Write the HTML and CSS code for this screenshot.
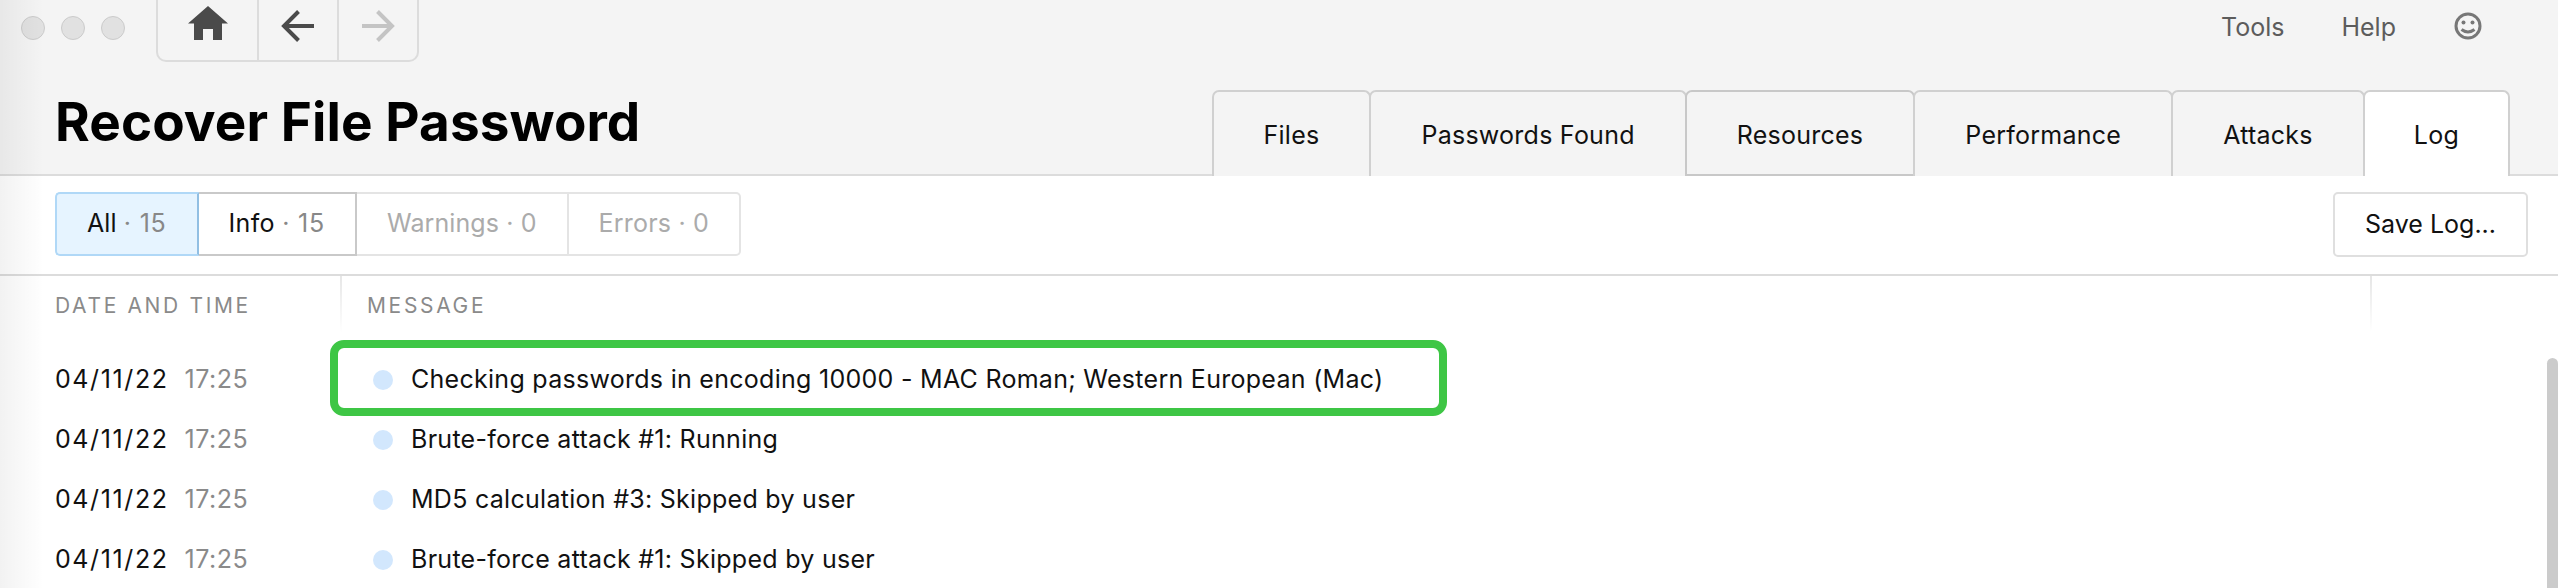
FILE: index.html
```html
<!DOCTYPE html>
<html lang="en">
<head>
<meta charset="utf-8">
<title>Recover File Password</title>
<link rel="stylesheet" href="styles.css">
</head>
<body>
<div class="window">
  <header class="header">
    <div class="topbar">
      <div class="lights"><span class="light"></span><span class="light"></span><span class="light"></span></div>
      <nav class="nav">
        <div class="nav-btn nav-home">
          <svg width="40" height="34" viewBox="0 0 40 34"><path class="fill-dark" d="M20 0 L40 17.500 L34 17.500 L34 34 L25 34 L25 23 L15 23 L15 34 L6 34 L6 17.500 L0 17.500 Z"/></svg>
        </div>
        <div class="nav-btn nav-back">
          <svg width="34" height="34" viewBox="0 0 34 34"><path class="stroke-dark" d="M33 17 H4 M17.500 2.500 L3 17 L17.500 31.500"/></svg>
        </div>
        <div class="nav-btn nav-fwd">
          <svg width="34" height="34" viewBox="0 0 34 34"><path class="stroke-light" d="M1 17 H30 M16.500 2.500 L31 17 L16.500 31.500"/></svg>
        </div>
      </nav>
      <div class="menu">
        <span class="menu-item menu-tools">Tools</span>
        <span class="menu-item menu-help">Help</span>
        <svg class="smiley" width="28" height="28" viewBox="0 0 28 28">
          <circle class="smile-line" cx="14" cy="14" r="12"/>
          <circle class="smile-eye" cx="9.500" cy="10.500" r="2"/>
          <circle class="smile-eye" cx="18.500" cy="10.500" r="2"/>
          <path class="smile-line" d="M7.500 17.500 Q14 22.500 20.500 17.500"/>
        </svg>
      </div>
    </div>
    <div class="titlebar">
      <h1 class="title">Recover File Password</h1>
      <div class="tabs">
        <div class="tab">Files</div>
        <div class="tab">Passwords Found</div>
        <div class="tab tab-outlined">Resources</div>
        <div class="tab">Performance</div>
        <div class="tab">Attacks</div>
        <div class="tab tab-active">Log</div>
      </div>
    </div>
  </header>

  <section class="filterbar">
    <div class="filters">
      <div class="seg seg-all">All <span class="count">· 15</span></div>
      <div class="seg seg-info">Info <span class="count">· 15</span></div>
      <div class="seg seg-off">Warnings · 0</div>
      <div class="seg seg-off seg-last">Errors · 0</div>
    </div>
    <div class="save">Save Log...</div>
  </section>

  <section class="table">
    <div class="thead">
      <div class="th th-date">DATE AND TIME</div>
      <div class="th th-msg">MESSAGE</div>
      <div class="th th-end"></div>
    </div>
    <div class="row">
      <div class="cell-date"><span class="date">04/11/22</span><span class="time">17:25</span></div>
      <div class="cell-msg"><span class="dot"></span><span class="msg">Checking passwords in encoding 10000 - MAC Roman; Western European (Mac)</span><div class="highlight"></div></div>
    </div>
    <div class="row">
      <div class="cell-date"><span class="date">04/11/22</span><span class="time">17:25</span></div>
      <div class="cell-msg"><span class="dot"></span><span class="msg">Brute-force attack #1: Running</span></div>
    </div>
    <div class="row">
      <div class="cell-date"><span class="date">04/11/22</span><span class="time">17:25</span></div>
      <div class="cell-msg"><span class="dot"></span><span class="msg">MD5 calculation #3: Skipped by user</span></div>
    </div>
    <div class="row">
      <div class="cell-date"><span class="date">04/11/22</span><span class="time">17:25</span></div>
      <div class="cell-msg"><span class="dot"></span><span class="msg">Brute-force attack #1: Skipped by user</span></div>
    </div>
    <div class="scrollbar"></div>
  </section>
  <div class="edge-shade"></div>
</div>
</body>
</html>
```
FILE: styles.css
```css
* { box-sizing: border-box; }
html, body { margin: 0; padding: 0; }
body {
  font-family: Inter, "Liberation Sans", sans-serif;
  font-size: 25px;
  color: #111;
  background: #fff;
}
.window {
  position: relative;
  display: flex;
  flex-direction: column;
  width: 2558px;
  height: 588px;
  overflow: hidden;
}
.edge-shade {
  position: absolute;
  left: 0;
  top: 0;
  bottom: 0;
  width: 44px;
  background: linear-gradient(to right, rgba(0,0,0,.05), rgba(0,0,0,0));
  pointer-events: none;
}

/* header */
.header {
  height: 176px;
  background: #f4f4f4;
  border-bottom: 2px solid #dcdcdc;
  display: flex;
  flex-direction: column;
}
.topbar {
  height: 90px;
  flex: none;
  display: flex;
  align-items: flex-start;
}
.lights {
  display: flex;
  gap: 16px;
  padding: 16px 0 0 21px;
}
.light {
  width: 24px;
  height: 24px;
  border-radius: 50%;
  background: #e1e1e1;
  border: 1px solid #cbcbcb;
}
.nav {
  display: flex;
  height: 62px;
  margin-left: 31px;
  border: 2px solid #dcdcdc;
  border-top: 0;
  border-radius: 0 0 10px 10px;
}
.nav-btn {
  display: flex;
  padding-top: 6px;
  justify-content: center;
  border-left: 2px solid #dcdcdc;
}
.nav-home { width: 99px; border-left: 0; }
.nav-back { width: 80px; padding-top: 9px; }
.nav-fwd { width: 80px; padding-top: 9px; }
.fill-dark { fill: #4a4a4a; }
.stroke-dark, .stroke-light { fill: none; stroke-width: 4; }
.stroke-dark { stroke: #4a4a4a; }
.stroke-light { stroke: #c4c4c4; }
.menu {
  margin-left: auto;
  display: flex;
  align-items: center;
  height: 54px;
  padding-right: 76px;
  color: #5c5c5c;
}
.menu-item { font-size: 25px; }
.menu-help { margin-left: 57px; }
.smiley { margin-left: 58px; margin-top: -2px; }
.smile-line { fill: none; stroke: #777; stroke-width: 3; }
.smile-eye { fill: #777; }

.titlebar {
  flex: 1;
  display: flex;
  justify-content: space-between;
  align-items: flex-start;
  min-height: 0;
}
.title {
  margin: 0;
  padding: 0 0 0 55px;
  font-size: 53px;
  font-weight: 700;
  line-height: 64px;
  letter-spacing: .1px;
  color: #000;
}
.tabs {
  display: flex;
  padding-right: 48px;
  height: 86px;
}
.tab {
  height: 86px;
  margin-left: -2px;
  padding: 23px 50px 0;
  background: #f4f4f4;
  border: 2px solid #d0d0d0;
  border-bottom: 0;
  border-radius: 7px 7px 0 0;
  line-height: 40px;
  letter-spacing: .25px;
  white-space: nowrap;
}
.tab-outlined { border-bottom: 2px solid #c8c8c8; border-color: #c8c8c8; }
.tab-active { background: #fff; padding: 23px 49px 0; }

/* filter bar */
.filterbar {
  flex: none;
  height: 100px;
  display: flex;
  justify-content: space-between;
  align-items: flex-start;
  padding: 16px 30px 0 55px;
  border-bottom: 2px solid #dcdcdc;
}
.filters { display: flex; }
.seg {
  height: 64px;
  padding: 0 30px;
  line-height: 58px;
  letter-spacing: .1px;
  white-space: nowrap;
  border: 2px solid #e4e4e4;
  border-left: 0;
}
.count { color: #888; letter-spacing: .8px; }
.seg-all {
  padding: 0 30px;
  background: #e6f4ff;
  border: 2px solid #b0d8f7;
  border-right-color: #92bfe3;
  border-radius: 5px 0 0 5px;
}
.seg-info { border-color: #c9c9c9; letter-spacing: .3px; }
.seg-off { color: #ababab; }
.seg-last { border-radius: 0 5px 5px 0; letter-spacing: .2px; }
.save {
  height: 65px;
  padding: 0 30px;
  line-height: 60px;
  border: 2px solid #dfdfdf;
  border-radius: 5px;
}

/* table */
.table { position: relative; flex: 1; min-height: 0; }
.thead {
  height: 74px;
  display: flex;
  color: #8a8a8a;
  font-size: 21px;
  letter-spacing: 2.650px;
}
.th { height: 56px; line-height: 60px; }
.th-date { width: 340px; padding-left: 55px; }
.th-msg {
  width: 2030px;
  padding-left: 25px;
  border-left: 2px solid;
  border-image: linear-gradient(to bottom, #e6e6e6, #ffffff) 1;
}
.th-end {
  width: 2px;
  background: linear-gradient(to bottom, #e6e6e6, #ffffff);
}
.row {
  height: 60px;
  display: flex;
  align-items: center;
  white-space: nowrap;
}
.cell-date { width: 340px; padding: 0 0 2px 55px; }
.date { letter-spacing: 1.600px; }
.time { margin-left: 16px; color: #8a8a8a; letter-spacing: .5px; }
.cell-msg {
  position: relative;
  display: flex;
  align-items: center;
  height: 60px;
  padding-left: 33px;
}
.dot {
  width: 20px;
  height: 20px;
  margin-right: 18px;
  border-radius: 50%;
  background: #d2e7fd;
}
.msg { letter-spacing: .28px; padding-bottom: 2px; }
.highlight {
  position: absolute;
  left: -10px;
  top: -10px;
  width: 1117px;
  height: 76px;
  border: 8px solid #3ec645;
  border-radius: 14px;
}
.scrollbar {
  position: absolute;
  right: 0;
  top: 82px;
  width: 11px;
  bottom: 0;
  background: #cbcbcb;
  border-radius: 6px 6px 0 0;
}
```
